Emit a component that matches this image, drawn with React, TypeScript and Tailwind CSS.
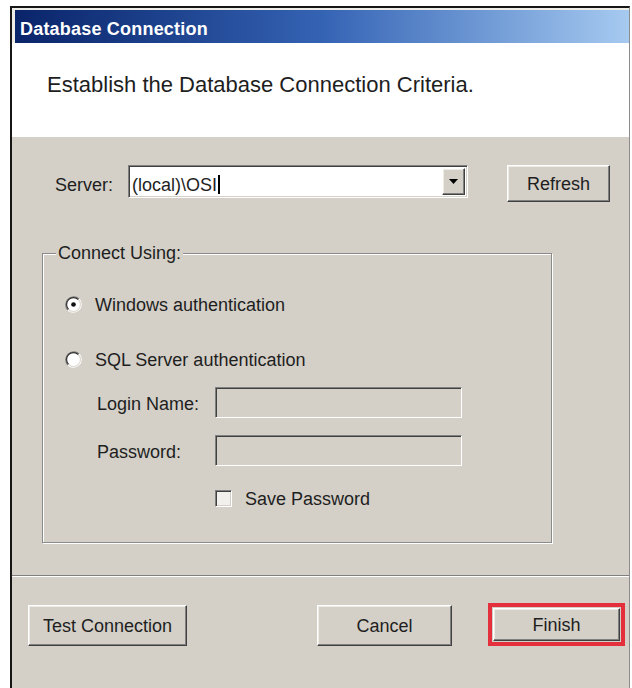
import React from "react";

const raised =
  "border border-t-white border-l-white border-b-[#404040] border-r-[#404040] shadow-[inset_-1px_-1px_0_#808080,inset_1px_1px_0_#eeece7] bg-[#d4d0c8]";
const sunken =
  "border border-t-[#808080] border-l-[#808080] border-b-white border-r-white shadow-[inset_1px_1px_0_#404040,inset_-1px_-1px_0_#d4d0c8]";

function Radio({ checked }: { checked?: boolean }) {
  return (
    <svg width="17" height="17" viewBox="0 0 16 16" className="shrink-0">
      <circle cx="8" cy="8" r="6.5" fill="#ffffff" />
      <path d="M2.7 13.3A7.5 7.5 0 0 1 13.3 2.7" stroke="#7a7a7a" strokeWidth="1.1" fill="none" />
      <path d="M3.4 12.6A6.5 6.5 0 0 1 12.6 3.4" stroke="#303030" strokeWidth="1.1" fill="none" />
      <path d="M13.3 2.7A7.5 7.5 0 0 1 2.7 13.3" stroke="#ffffff" fill="none" />
      <path d="M12.6 3.4A6.5 6.5 0 0 1 3.4 12.6" stroke="#dcd9d2" fill="none" />
      {checked && <circle cx="8" cy="8" r="2.2" fill="#111111" />}
    </svg>
  );
}

function DropArrow() {
  return (
    <svg width="9" height="5" viewBox="0 0 9 5">
      <path d="M0 0H9L4.5 5Z" fill="#000000" />
    </svg>
  );
}

export default function App() {
  return (
    <div className="w-[632px] h-[688px] bg-white overflow-hidden font-['Liberation_Sans',Arial,sans-serif] text-[#1e1e1e]">
      <div className="ml-[10px] mt-[6px] w-[620px] h-[682px] border-t-2 border-l-2 border-[#161616] border-r border-r-[#8c8c8c] flex flex-col bg-[#d4d0c8]">
        {/* window frame + caption */}
        <div className="bg-[#eeece7] pt-[2px] pl-[3px]">
          <div className="h-[33px] flex items-center pl-[5px] pt-[5px] bg-gradient-to-r from-[#0a246a] via-[#3563b4] to-[#a6caf0]">
            <span className="text-white font-bold text-[18px] leading-none tracking-[0.2px]">
              Database Connection
            </span>
          </div>
        </div>

        {/* wizard header */}
        <div className="bg-white h-[94px] pl-[35px] pt-[31px]">
          <p className="text-[22px] leading-none">Establish the Database Connection Criteria.</p>
        </div>

        {/* body */}
        <div className="flex-1 flex flex-col pt-[28px]">
          <div className="flex items-start pl-[43px] h-[37px]">
            <div className="w-[73px] h-[33px] flex items-center pt-[7px] text-[18px] leading-none">
              Server:
            </div>
            <div className={`w-[340px] h-[33px] bg-white flex items-stretch ${sunken}`}>
              <div className="flex-1 flex items-center pl-[3px] pt-[6px] text-[18px] leading-none">
                <span>(local)\OSI</span>
                <span className="w-[2px] h-[19px] bg-black ml-[1px]" />
              </div>
              <div className={`w-[23px] my-[2px] mr-[2px] flex items-center justify-center ${raised}`}>
                <DropArrow />
              </div>
            </div>
            <button className={`ml-[39px] w-[103px] h-[37px] text-[18px] leading-none flex items-center justify-center ${raised}`}>
              Refresh
            </button>
          </div>

          <fieldset className="ml-[30px] mt-[42px] w-[510px] border border-[#8a8a8a] shadow-[inset_1px_1px_0_#ffffff,1px_1px_0_#ffffff] pb-[34px]">
            <legend className="ml-[13px] px-[2px] text-[18px] leading-[18px] bg-[#d4d0c8]">Connect Using:</legend>

            <div className="mt-[32px] ml-[22px] h-[20px] flex items-center">
              <Radio checked />
              <span className="ml-[13px] text-[18px] leading-none pt-[2px]">Windows authentication</span>
            </div>

            <div className="mt-[35px] ml-[22px] h-[20px] flex items-center">
              <Radio />
              <span className="ml-[13px] text-[18px] leading-none pt-[2px]">SQL Server authentication</span>
            </div>

            <div className="mt-[18px] ml-[54px] flex items-center">
              <span className="w-[118px] text-[18px] leading-none pt-[3px]">Login Name:</span>
              <div className={`w-[247px] h-[31px] bg-[#d4d0c8] ${sunken}`} />
            </div>

            <div className="mt-[17px] ml-[54px] flex items-center">
              <span className="w-[118px] text-[18px] leading-none pt-[3px]">Password:</span>
              <div className={`w-[247px] h-[31px] bg-[#d4d0c8] ${sunken}`} />
            </div>

            <div className="mt-[22px] ml-[172px] h-[20px] flex items-center">
              <div className={`w-[17px] h-[17px] bg-[#f2f0ec] ${sunken}`} />
              <span className="ml-[13px] text-[18px] leading-none pt-[2px]">Save Password</span>
            </div>
          </fieldset>

          {/* etched separator */}
          <div className="mt-[32px] h-[2px] border-t border-t-[#808080] border-b border-b-white" />

          <div className="mt-[28px] flex items-start pl-[16px]">
            <button className={`w-[159px] h-[41px] text-[18px] leading-none flex items-center justify-center ${raised}`}>
              Test Connection
            </button>
            <button className={`ml-[130px] w-[135px] h-[41px] text-[18px] leading-none flex items-center justify-center ${raised}`}>
              Cancel
            </button>
            <button className={`ml-[41px] mt-[3px] w-[127px] h-[33px] text-[18px] leading-none flex items-center justify-center outline-4 outline-offset-1 outline-[#e4303d] ${raised}`}>
              Finish
            </button>
          </div>
        </div>
      </div>
    </div>
  );
}
